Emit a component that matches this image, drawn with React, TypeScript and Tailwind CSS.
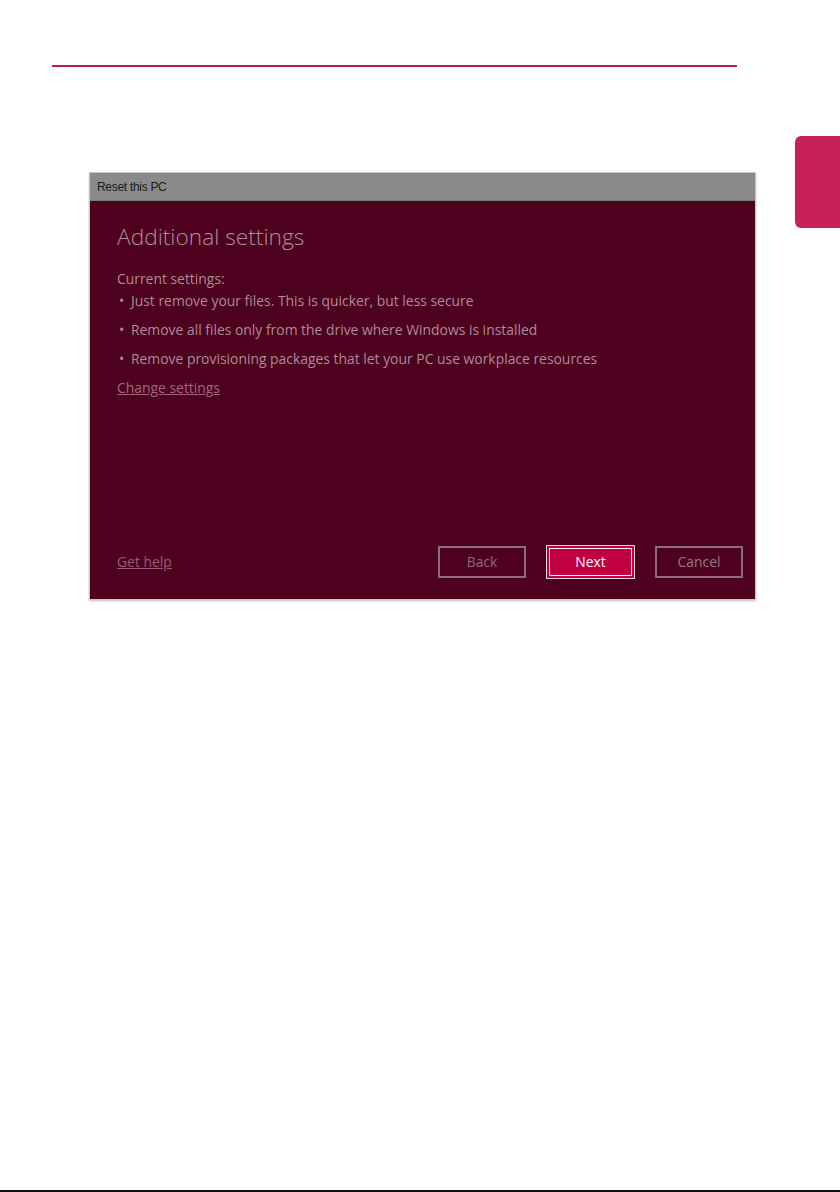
import React from 'react';

const bullets = [
  'Just remove your files. This is quicker, but less secure',
  'Remove all files only from the drive where Windows is installed',
  'Remove provisioning packages that let your PC use workplace resources',
];

export default function App() {
  return (
    <div className="relative w-[840px] h-[1192px] bg-white overflow-hidden font-['Open_Sans',sans-serif]">
      {/* header rule */}
      <div className="ml-[52px] mt-[65px] w-[685px] h-[2px] bg-[#b3204f]" />

      {/* side tab */}
      <div className="absolute left-[795px] top-[136px] w-[45px] h-[92px] rounded-l-[6px] bg-[#c8205a]" />

      {/* dialog */}
      <div className="ml-[89px] mt-[105px] w-[667px] h-[428px] flex flex-col border border-[#c8c8c8] shadow-[0_1px_2px_rgba(0,0,0,0.25)]">
        <div className="h-[28px] shrink-0 bg-[#8a8a8a] border-b border-[#7a7a7a] pl-[7px] flex items-center">
          <span className="text-[12px] text-[#1a1a1a] tracking-[-0.3px] font-['Liberation_Sans',sans-serif]">
            Reset this PC
          </span>
        </div>
        <div className="flex-1 bg-[#4e001f] pl-[27px] pr-[12px] flex flex-col">
          <h1 className="mt-[21px] text-[22.7px] font-light leading-[30px] text-[#b38e9b]">Additional settings</h1>
          <div className="mt-[17px] text-[13.9px] leading-[29px] text-[#b08a98]">
            <div className="leading-[20px] -mb-[3px]">Current settings:</div>
            {bullets.map((b) => (
              <div key={b} className="flex">
                <span className="w-[14px] pl-[2px]">•</span>
                <span>{b}</span>
              </div>
            ))}
            <a className="block underline text-[#a06880] leading-[29px]">Change settings</a>
          </div>

          <div className="mt-auto mb-[21px] flex items-center">
            <a className="underline text-[13.9px] text-[#9a5c76]">Get help</a>
            <div className="ml-auto flex gap-[20px]">
              <button className="w-[88px] h-[32px] border-2 border-[#8c7078] text-[13.9px] text-[#8c6a78]">Back</button>
              <button className="w-[89px] h-[34px] -my-px border border-[#e9d5db] bg-[#c0003f] shadow-[inset_0_0_0_2px_#c0003f,inset_0_0_0_3px_#ffffff] text-[13.9px] text-white">
                Next
              </button>
              <button className="w-[88px] h-[32px] border-2 border-[#8c7078] text-[13.9px] text-[#9a7888]">Cancel</button>
            </div>
          </div>
        </div>
      </div>

      {/* scan edge at the bottom */}
      <div className="absolute left-0 bottom-0 w-full h-[2px] bg-[#111]" />
    </div>
  );
}
